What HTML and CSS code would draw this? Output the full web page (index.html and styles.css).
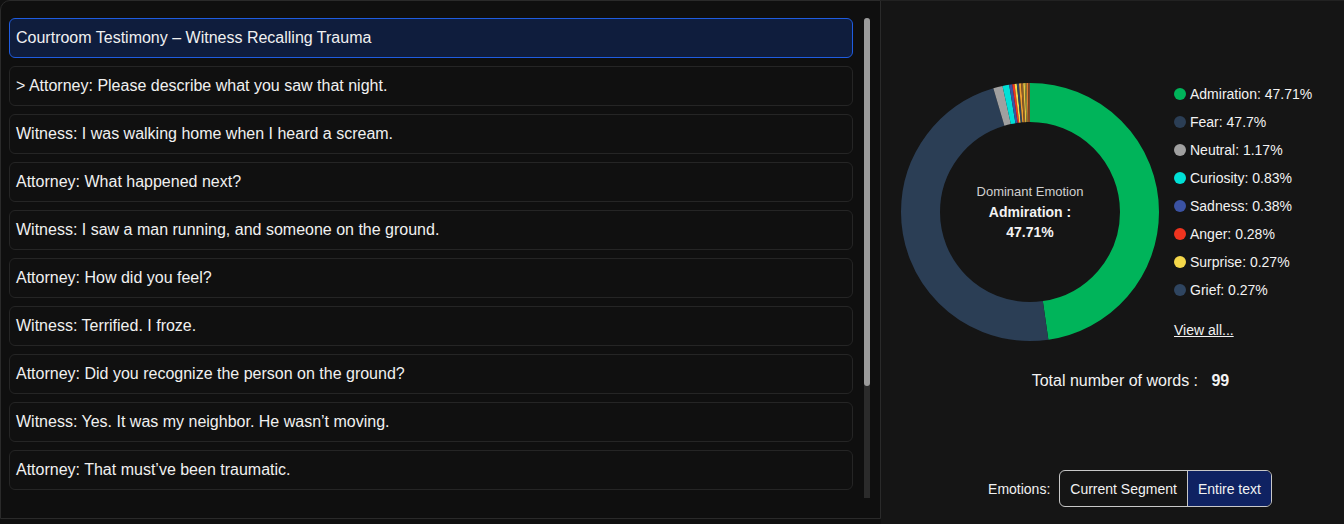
FILE: index.html
```html
<!DOCTYPE html>
<html>
<head>
<meta charset="utf-8">
<link rel="stylesheet" href="styles.css">
</head>
<body>
<div class="app">
  <section class="left">
    <div class="list">
      <div class="item active">Courtroom Testimony – Witness Recalling Trauma</div>
      <div class="item">&gt; Attorney: Please describe what you saw that night.</div>
      <div class="item">Witness: I was walking home when I heard a scream.</div>
      <div class="item">Attorney: What happened next?</div>
      <div class="item">Witness: I saw a man running, and someone on the ground.</div>
      <div class="item">Attorney: How did you feel?</div>
      <div class="item">Witness: Terrified. I froze.</div>
      <div class="item">Attorney: Did you recognize the person on the ground?</div>
      <div class="item">Witness: Yes. It was my neighbor. He wasn’t moving.</div>
      <div class="item">Attorney: That must’ve been traumatic.</div>
    </div>
    <div class="scrollbar"><div class="thumb"></div></div>
  </section>
  <section class="right">
    <div class="chart-row">
      <div class="donut">
        <svg width="258" height="258" viewBox="0 0 258 258">
          <g transform="rotate(-90 129 129)" fill="none" stroke-width="39">
            <circle cx="129" cy="129" r="109.5" pathLength="100" stroke="#00b45a" stroke-dasharray="47.71 52.29" stroke-dashoffset="0"/>
            <circle cx="129" cy="129" r="109.5" pathLength="100" stroke="#2b3e55" stroke-dasharray="47.7 52.3" stroke-dashoffset="-47.71"/>
            <circle cx="129" cy="129" r="109.5" pathLength="100" stroke="#a0a0a0" stroke-dasharray="1.17 98.83" stroke-dashoffset="-95.41"/>
            <circle cx="129" cy="129" r="109.5" pathLength="100" stroke="#00e0d6" stroke-dasharray="0.83 99.17" stroke-dashoffset="-96.58"/>
            <circle cx="129" cy="129" r="109.5" pathLength="100" stroke="#3b52a2" stroke-dasharray="0.38 99.62" stroke-dashoffset="-97.41"/>
            <circle cx="129" cy="129" r="109.5" pathLength="100" stroke="#f0341f" stroke-dasharray="0.28 99.72" stroke-dashoffset="-97.79"/>
            <circle cx="129" cy="129" r="109.5" pathLength="100" stroke="#f5d84a" stroke-dasharray="0.27 99.73" stroke-dashoffset="-98.07"/>
            <circle cx="129" cy="129" r="109.5" pathLength="100" stroke="#2f4560" stroke-dasharray="0.27 99.73" stroke-dashoffset="-98.34"/>
            <circle cx="129" cy="129" r="109.5" pathLength="100" stroke="#f0a030" stroke-dasharray="0.27 99.73" stroke-dashoffset="-98.61"/>
            <circle cx="129" cy="129" r="109.5" pathLength="100" stroke="#8b5a2b" stroke-dasharray="0.25 99.75" stroke-dashoffset="-98.88"/>
            <circle cx="129" cy="129" r="109.5" pathLength="100" stroke="#e8c440" stroke-dasharray="0.22 99.78" stroke-dashoffset="-99.13"/>
            <circle cx="129" cy="129" r="109.5" pathLength="100" stroke="#8a8a3a" stroke-dasharray="0.2 99.8" stroke-dashoffset="-99.35"/>
            <circle cx="129" cy="129" r="109.5" pathLength="100" stroke="#e07b30" stroke-dasharray="0.2 99.8" stroke-dashoffset="-99.55"/>
            <circle cx="129" cy="129" r="109.5" pathLength="100" stroke="#7a4a2a" stroke-dasharray="0.25 99.75" stroke-dashoffset="-99.75"/>
          </g>
        </svg>
        <div class="donut-center">
          <div class="dc-label">Dominant Emotion</div>
          <div class="dc-value">Admiration :</div>
          <div class="dc-value">47.71%</div>
        </div>
      </div>
      <div class="legend">
        <div class="lg-row"><span class="dot" style="background:#00b45a"></span>Admiration: 47.71%</div>
        <div class="lg-row"><span class="dot" style="background:#2b3e55"></span>Fear: 47.7%</div>
        <div class="lg-row"><span class="dot" style="background:#a0a0a0"></span>Neutral: 1.17%</div>
        <div class="lg-row"><span class="dot" style="background:#00e0d6"></span>Curiosity: 0.83%</div>
        <div class="lg-row"><span class="dot" style="background:#3b52a2"></span>Sadness: 0.38%</div>
        <div class="lg-row"><span class="dot" style="background:#f0341f"></span>Anger: 0.28%</div>
        <div class="lg-row"><span class="dot" style="background:#f5d84a"></span>Surprise: 0.27%</div>
        <div class="lg-row"><span class="dot" style="background:#2f4560"></span>Grief: 0.27%</div>
        <a class="view-all" href="#">View all...</a>
      </div>
    </div>
    <div class="words">Total number of words : <b>99</b></div>
    <div class="toggle-row">
      <span class="toggle-label">Emotions:</span>
      <div class="seg">
        <button class="seg-btn">Current Segment</button>
        <button class="seg-btn on">Entire text</button>
      </div>
    </div>
  </section>
</div>
</body>
</html>
```

FILE: styles.css
```css
* { box-sizing: border-box; }
html, body { margin: 0; padding: 0; }
body {
  background: #101010;
  font-family: "Liberation Sans", Arial, sans-serif;
  color: #f2f2f2;
  width: 1344px;
  height: 524px;
  overflow: hidden;
}
.app { display: flex; height: 524px; }

.left {
  width: 881px;
  height: 519px;
  background: #0f0f0f;
  border: 1px solid #2a2a2a;
  border-radius: 10px 0 0 0;
  padding: 17px 9px 19px 8px;
  display: flex;
  align-items: flex-start;
}
.list {
  width: 844px;
  height: 480px;
  overflow: hidden;
  display: flex;
  flex-direction: column;
  gap: 8px;
}
.scrollbar {
  width: 6px;
  height: 480px;
  margin-left: 11px;
  background: #2b2b2b;
  border-radius: 3px 3px 0 0;
}
.thumb {
  height: 368px;
  background: #9b9b9b;
  border-radius: 3px;
}

.item {
  flex: 0 0 40px;
  height: 40px;
  display: flex;
  align-items: center;
  padding: 0 6px 1px;
  border: 1px solid #252525;
  border-radius: 6px;
  background: #101010;
  font-size: 16px;
  color: #f0f0f0;
  white-space: nowrap;
}
.item.active {
  background: #0f1d3d;
  border-color: #1f5ce0;
}

.right {
  flex: 1;
  height: 524px;
  background: #151515;
  border-top: 1px solid #222;
  display: flex;
  flex-direction: column;
  padding: 82px 0 17px 20px;
}
.chart-row {
  display: flex;
  align-items: flex-start;
  gap: 15px;
}
.donut {
  position: relative;
  width: 258px;
  height: 258px;
}
.donut svg { display: block; }
.donut-center {
  position: absolute;
  inset: 0;
  display: flex;
  flex-direction: column;
  align-items: center;
  justify-content: center;
  text-align: center;
}
.dc-label { font-size: 13px; color: #d0d0d0; line-height: 20px; }
.dc-value { font-size: 14px; font-weight: bold; color: #f2f2f2; line-height: 20px; }

.legend {
  display: flex;
  flex-direction: column;
  font-size: 14px;
  color: #f2f2f2;
  margin-top: -3px;
}
.lg-row {
  display: flex;
  align-items: center;
  height: 28px;
}
.dot {
  width: 12px;
  height: 12px;
  border-radius: 50%;
  margin-right: 4px;
  flex: none;
}
.view-all {
  color: #f2f2f2;
  text-decoration: underline;
  margin-top: 18px;
  line-height: 16px;
  align-self: flex-start;
}

.words {
  margin-top: 31px;
  padding-left: 16px;
  text-align: center;
  font-size: 16px;
  color: #f2f2f2;
}
.words b { font-weight: 600; margin-left: 9px; }

.toggle-row {
  margin-top: auto;
  display: flex;
  align-items: center;
  justify-content: center;
  padding-left: 15px;
  gap: 9px;
}
.toggle-label { font-size: 14px; color: #f0f0f0; }
.seg {
  display: flex;
  border: 1px solid #c8c8c8;
  border-radius: 6px;
  overflow: hidden;
  height: 37px;
}
.seg-btn {
  font-family: "Liberation Sans", Arial, sans-serif;
  font-size: 14px;
  color: #f2f2f2;
  background: transparent;
  border: none;
  padding: 0 10px;
  height: 100%;
}
.seg-btn + .seg-btn { border-left: 1px solid #c8c8c8; }
.seg-btn.on { background: #0f2262; }
```
